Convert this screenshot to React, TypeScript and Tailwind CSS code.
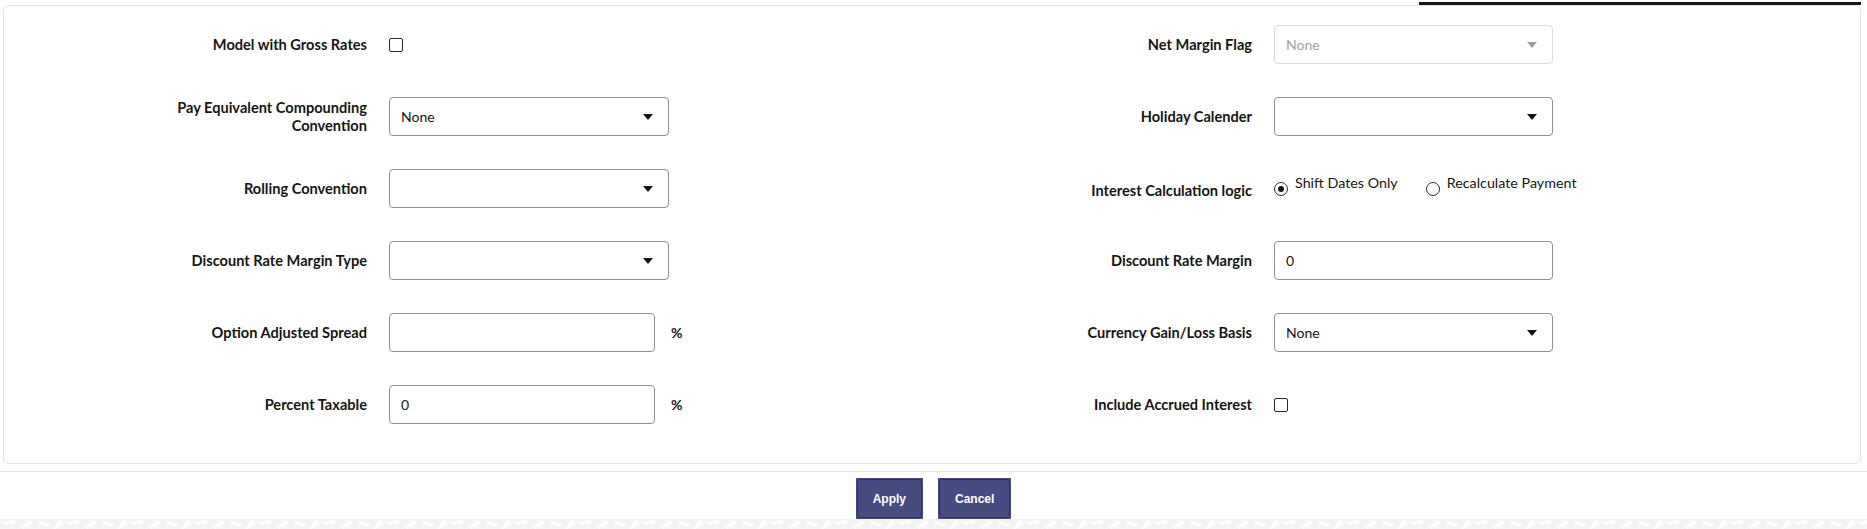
import type { ReactNode } from "react";

const font = { fontFamily: "Lato, 'Noto Sans', sans-serif" };

const Caret = ({ disabled }: { disabled?: boolean }) => (
  <svg width="10" height="6" viewBox="0 0 10 6">
    <path d="M0 0 H10 L5 6 Z" fill={disabled ? "#a0a0a0" : "#161513"} />
  </svg>
);

const Select = ({ value, disabled, w = "w-[280px]" }: { value?: string; disabled?: boolean; w?: string }) => (
  <div
    className={`${w} h-full flex items-center justify-between pl-[11px] pr-[15px] rounded-[4px] border bg-white text-[14px] ${
      disabled ? "border-[#dcdcdc] text-[#a3a3a3]" : "border-[#8f8f8f] text-[#161513]"
    }`}
  >
    <span>{value}</span>
    <Caret disabled={disabled} />
  </div>
);

const TextInput = ({ value, w = "w-[266px]" }: { value?: string; w?: string }) => (
  <div className={`${w} h-full flex items-center pl-[11px] rounded-[4px] border border-[#8f8f8f] bg-white text-[14px] text-[#161513]`}>
    {value}
  </div>
);

const Checkbox = () => (
  <div className="w-[14px] h-[14px] rounded-[2px] border-[1.5px] border-[#2b2b2b] bg-white" />
);

const Radio = ({ checked, label }: { checked?: boolean; label: string }) => (
  <div className="flex items-start gap-[7px]">
    <div className="mt-[8px] w-[14px] h-[14px] rounded-full border-[1.5px] border-[#2b2b2b] flex items-center justify-center">
      {checked && <div className="w-[6px] h-[6px] rounded-full bg-[#161513]" />}
    </div>
    <span className="text-[14.3px] leading-[18px] font-normal text-[#161513]">{label}</span>
  </div>
);

const Field = ({ label, children }: { label: string; children: ReactNode }) => (
  <div className="flex items-center h-[39px] gap-[22px]">
    <div className="w-[200px] text-right text-[14.6px] leading-[18px] font-bold text-[#161513]">{label}</div>
    <div className="flex items-center h-full">{children}</div>
  </div>
);

const Percent = () => <span className="ml-[16px] text-[14px] font-bold text-[#161513]">%</span>;

export default function App() {
  return (
    <div className="w-full min-h-[529px] bg-white" style={font}>
      <div className="pt-[2px] flex justify-end pr-[6px]">
        <div className="w-[442px] h-[3px] bg-[#161513]" />
      </div>
      <div className="ml-[3px] mr-[6px] border border-[#e2e2e2] rounded-[6px] pt-[19px] pb-[39px]">
        <div className="grid grid-cols-2 gap-y-[33px]">
          <div className="pl-[163px]">
            <Field label="Model with Gross Rates">
              <Checkbox />
            </Field>
          </div>
          <div className="pl-[120px]">
            <Field label="Net Margin Flag">
              <Select value="None" disabled w="w-[279px]" />
            </Field>
          </div>

          <div className="pl-[163px]">
            <Field label="Pay Equivalent Compounding Convention">
              <Select value="None" />
            </Field>
          </div>
          <div className="pl-[120px]">
            <Field label="Holiday Calender">
              <Select w="w-[279px]" />
            </Field>
          </div>

          <div className="pl-[163px]">
            <Field label="Rolling Convention">
              <Select />
            </Field>
          </div>
          <div className="pl-[120px]">
            <div className="flex items-center h-[39px] gap-[22px]">
              <div className="w-[200px] text-right text-[14.6px] leading-[18px] font-bold text-[#161513] mt-[4px]">
                Interest Calculation logic
              </div>
              <div className="self-start mt-[5px] flex gap-[28px]">
                <Radio checked label="Shift Dates Only" />
                <Radio label="Recalculate Payment" />
              </div>
            </div>
          </div>

          <div className="pl-[163px]">
            <Field label="Discount Rate Margin Type">
              <Select />
            </Field>
          </div>
          <div className="pl-[120px]">
            <Field label="Discount Rate Margin">
              <TextInput value="0" w="w-[279px]" />
            </Field>
          </div>

          <div className="pl-[163px]">
            <Field label="Option Adjusted Spread">
              <TextInput />
              <Percent />
            </Field>
          </div>
          <div className="pl-[120px]">
            <Field label="Currency Gain/Loss Basis">
              <Select value="None" w="w-[279px]" />
            </Field>
          </div>

          <div className="pl-[163px]">
            <Field label="Percent Taxable">
              <TextInput value="0" />
              <Percent />
            </Field>
          </div>
          <div className="pl-[120px]">
            <Field label="Include Accrued Interest">
              <Checkbox />
            </Field>
          </div>
        </div>
      </div>

      <div className="mt-[7px] border-t border-[#e2e2e2] pt-[6px] flex justify-center gap-[15px]">
        {["Apply", "Cancel"].map((t) => (
          <button key={t} className="h-[41px] p-[1px] bg-[#474c80]">
            <span
              className="h-full flex items-center px-[15px] rounded-[3px] border border-[#2c3060] text-white text-[12px] font-bold"
              style={{ fontFamily: "'Liberation Sans', Arial, sans-serif" }}
            >
              {t}
            </span>
          </button>
        ))}
      </div>

      <svg className="block w-full h-[10px]" preserveAspectRatio="none">
        <defs>
          <pattern id="bgp" width="64" height="10" patternUnits="userSpaceOnUse">
            <rect width="64" height="10" fill="#f4f4f4" />
            <path d="M2 3 L14 1 L16 4 L5 6 Z" fill="#ffffff" />
            <path d="M20 8 L30 2 L33 4 L23 10 Z" fill="#ffffff" />
            <path d="M38 2 L50 5 L49 8 L37 5 Z" fill="#ffffff" />
            <path d="M52 9 L60 1 L63 3 L56 10 Z" fill="#ffffff" />
          </pattern>
        </defs>
        <rect width="100%" height="10" fill="url(#bgp)" />
      </svg>
    </div>
  );
}
